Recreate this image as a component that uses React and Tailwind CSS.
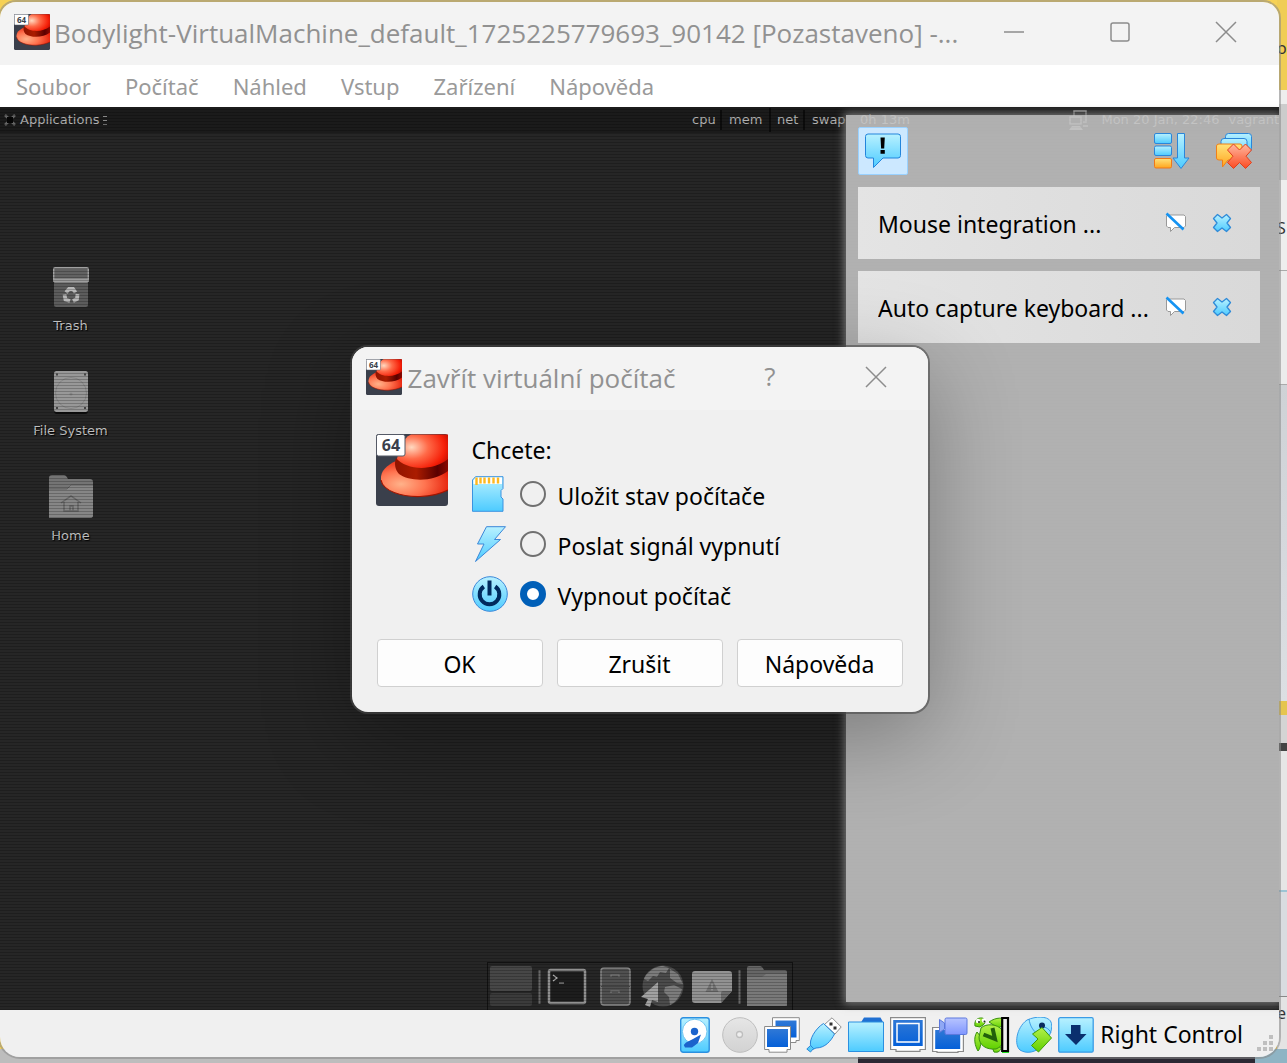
import React, { useState } from 'react';

const UI_FONT = "font-['Noto_Sans','Open_Sans',sans-serif]";
const TITLE_FONT = "font-['Open_Sans','Noto_Sans',sans-serif]";

const Gradients = () => (
  <svg width="0" height="0" className="absolute" aria-hidden="true">
    <defs>
      <linearGradient id="blue" x1="0" y1="0" x2="0" y2="1">
        <stop offset="0" stopColor="#b8f1ff" />
        <stop offset="1" stopColor="#4dcbff" />
      </linearGradient>
      <linearGradient id="screen" x1="0" y1="0" x2="0" y2="1">
        <stop offset="0" stopColor="#2f78d6" />
        <stop offset="1" stopColor="#0560d8" />
      </linearGradient>
      <linearGradient id="orange" x1="0" y1="0" x2="0" y2="1">
        <stop offset="0" stopColor="#ffe27a" />
        <stop offset="1" stopColor="#ffa51e" />
      </linearGradient>
      <linearGradient id="red" x1="0" y1="0" x2="0" y2="1">
        <stop offset="0" stopColor="#ffb9a0" />
        <stop offset="1" stopColor="#fb4a22" />
      </linearGradient>
      <linearGradient id="green" x1="0" y1="0" x2="0" y2="1">
        <stop offset="0" stopColor="#b4f04a" />
        <stop offset="1" stopColor="#5fd000" />
      </linearGradient>
      <linearGradient id="violet" x1="0" y1="0" x2="0" y2="1">
        <stop offset="0" stopColor="#b7c4ff" />
        <stop offset="1" stopColor="#8096ff" />
      </linearGradient>
      <linearGradient id="disc" x1="0" y1="0" x2="0" y2="1">
        <stop offset="0" stopColor="#e6e6e6" />
        <stop offset="1" stopColor="#d2d2d2" />
      </linearGradient>
      <radialGradient id="crown" cx="0.3" cy="0.35" r="0.8">
        <stop offset="0" stopColor="#ffd9c0" />
        <stop offset="0.4" stopColor="#ff6a48" />
        <stop offset="0.8" stopColor="#f51f08" />
        <stop offset="1" stopColor="#c00c00" />
      </radialGradient>
      <radialGradient id="brim" cx="0.3" cy="0.65" r="0.8">
        <stop offset="0" stopColor="#ffb28a" />
        <stop offset="0.45" stopColor="#ff7450" />
        <stop offset="1" stopColor="#e21400" />
      </radialGradient>
      <linearGradient id="band" x1="0" y1="0" x2="1" y2="0">
        <stop offset="0" stopColor="#8f1400" />
        <stop offset="0.4" stopColor="#ab1c00" />
        <stop offset="0.8" stopColor="#5a0000" />
        <stop offset="1" stopColor="#8a0800" />
      </linearGradient>
    </defs>
  </svg>
);

const RedHat = ({ className }) => (
  <svg viewBox="0 0 72 72" className={className} aria-hidden="true">
    <rect width="72" height="72" rx="3" fill="#3a3f4b" />
    <path d="M72 28L20 27C11 31 4 37 5 46C7 57 25 63 44 62.500C56 62 66 59 72 56Z" fill="url(#brim)" />
    <path d="M5 46C7 57 25 63 44 62.500C56 62 66 59 72 56" fill="none" stroke="#a01500" strokeWidth="1.200" />
    <path d="M20 30C22 18 26 4 35 0.500H72V32C60 38 32 40 20 30Z" fill="url(#crown)" />
    <path d="M20 24C30 36 56 38 72 25V37C58 48 34 48 23 40C19 36 18 29 20 24Z" fill="url(#band)" />
    <rect x="0.500" y="0.500" width="28.500" height="21.500" rx="2" fill="#fff" stroke="#555a66" strokeWidth="1" />
    <text x="15" y="17" textAnchor="middle" fontFamily="Open Sans" fontWeight="700" fontSize="16" fill="#3a3f4b">64</text>
  </svg>
);

const SdCard = () => (
  <svg viewBox="0 0 36 36" className="size-9" aria-hidden="true">
    <path d="M0.500 4L3.500 0.700H31V12.500L29 14.500V21L31 23V35.300H0.500Z" fill="url(#blue)" stroke="#3b93e0" />
    <path d="M1.500 4.500L4 1.500H30V8H1.500Z" fill="#fff" />
    <path d="M4.500 1.500V9M8.500 1.500V7.500M12.500 1.500V7.500M17 1.500V7.500M21.500 1.500V7.500M26 1.500V7.500" stroke="#ffb81f" strokeWidth="2.400" />
  </svg>
);

const Lightning = () => (
  <svg viewBox="0 0 36 36" className="size-9" aria-hidden="true">
    <path d="M14.500 0.700H33.500L22.500 13.500H28.500L3.500 35.500L12 18H5.500Z" fill="url(#blue)" stroke="#3b87d8" />
  </svg>
);

const PowerIcon = () => (
  <svg viewBox="0 0 36 36" className="size-9" aria-hidden="true">
    <circle cx="18" cy="18" r="17.300" fill="url(#blue)" stroke="#3b87d8" />
    <path d="M11.800 10.500A9.800 9.800 0 1 0 23.200 10.500" fill="none" stroke="#002a5e" strokeWidth="4" />
    <path d="M17.500 4.500V19.500" stroke="#002a5e" strokeWidth="4" />
  </svg>
);

const AlertBubble = () => (
  <svg viewBox="0 0 36 36" className="size-9" aria-hidden="true">
    <path d="M3 1H33A2.500 2.500 0 0 1 35.500 3.500V22.500A2.500 2.500 0 0 1 33 25H18L8.500 34.500V25H3A2.500 2.500 0 0 1 0.500 22.500V3.500A2.500 2.500 0 0 1 3 1Z" fill="url(#blue)" stroke="#2385dc" />
    <path d="M15.500 4.500H19.800L19.200 15.500H16.100ZM15.500 17H19.800V20.800H15.500Z" fill="#000" />
  </svg>
);

const SortIcon = () => (
  <svg viewBox="0 0 36 36" className="size-9" aria-hidden="true">
    <g fill="url(#blue)" stroke="#2b86d9">
      <rect x="0.500" y="0.500" width="17" height="10" rx="1.500" />
      <rect x="0.500" y="13" width="17" height="9.500" rx="1.500" />
      <path d="M23.500 0.500H30.500V25H35L27 35.500L19 25H23.500Z" />
    </g>
    <rect x="0.500" y="25.500" width="17" height="9.500" rx="1.500" fill="url(#orange)" stroke="#f07818" />
  </svg>
);

const ClearAllIcon = () => (
  <svg viewBox="0 0 36 36" className="size-9" aria-hidden="true">
    <g fill="url(#blue)" stroke="#2b86d9">
      <rect x="9.500" y="0.500" width="26" height="18" rx="3" />
      <rect x="5" y="5.500" width="26" height="18" rx="3" />
    </g>
    <path d="M3 11H24Q26 11 26 13V27H12L6.500 34V27H3Q0.500 27 0.500 25V13Q0.500 11 3 11Z" fill="url(#orange)" stroke="#f08018" />
    <path d="M17.500 11L23.500 17L29.500 11L35.500 17L30 23.200L35.500 29.500L29.500 35.500L23.500 29.500L17.500 35.500L11.500 29.500L17 23.200L11.500 17Z" fill="url(#red)" stroke="#e0401c" />
  </svg>
);

const MutedBubble = () => (
  <svg viewBox="0 0 22 22" className="size-[22px]" aria-hidden="true">
    <path d="M2.500 3H19L20.500 4.500V14L19 15.500H9.500L5.500 19.500V15.500H3L1.500 14V4Z" fill="#fff" stroke="#999" />
    <path d="M1.500 1.500L18.500 17.500" stroke="#1593f2" strokeWidth="2.600" />
  </svg>
);

const BlueCross = () => (
  <svg viewBox="0 0 20 20" className="size-5" aria-hidden="true">
    <path d="M5.500 1.500L10 5L14.500 1.500L18.500 5.500L15 10L18.500 14.500L14.500 18.500L10 15L5.500 18.500L1.500 14.500L5 10L1.500 5.500Z" fill="url(#blue)" stroke="#2f8bd8" strokeWidth="1.300" strokeLinejoin="round" />
  </svg>
);

// status bar indicators
const HardDisk = () => (
  <svg viewBox="0 0 36 36" className="size-9" aria-hidden="true">
    <rect x="0.700" y="0.700" width="28.500" height="34.500" rx="2.500" fill="url(#blue)" stroke="#2b90e0" strokeWidth="1.400" />
    <circle cx="14.700" cy="14.500" r="12.300" fill="#fff" stroke="#70c6f2" />
    <circle cx="14.500" cy="14.500" r="3.700" fill="#1b63cc" />
    <path d="M21 17.500L18 26L12 30.500H5L3.800 28L6 25.500L13 22Z" fill="#1b63cc" />
  </svg>
);

const OpticalDisk = () => (
  <svg viewBox="0 0 36 36" className="size-9" aria-hidden="true">
    <circle cx="18" cy="18" r="17.300" fill="url(#disc)" stroke="#bebebe" />
    <circle cx="17.500" cy="17.500" r="3" fill="#eee" stroke="#bebebe" strokeWidth="1.300" />
  </svg>
);

const Network = () => (
  <svg viewBox="0 0 36 36" className="size-9" aria-hidden="true">
    <path d="M8.500 0.700H35.300V23.500H32V25.500H27L8.500 20Z" fill="#fff" stroke="#8a8a8a" />
    <rect x="11.500" y="3.500" width="21" height="17" fill="url(#screen)" />
    <path d="M0.600 9.500H26.500V32.500H23V35.200H5V32.500H0.600Z" fill="#fff" stroke="#8a8a8a" />
    <rect x="3" y="12" width="21" height="18" fill="url(#screen)" />
  </svg>
);

const Usb = () => (
  <svg viewBox="0 0 36 36" className="size-9" aria-hidden="true">
    <path d="M26 0.800L35.200 10L29 17L18.500 7.500Z" fill="#fff" stroke="#909090" />
    <path d="M17.500 6.500L28.500 17C25 24 19 31 10 31L6.500 32.500L5 30C2 23 10 11 17.500 6.500Z" fill="url(#blue)" stroke="#2b86d9" />
    <path d="M4.500 28.500L7.500 31.500L4.500 35L0.800 32Z" fill="#57cdf7" stroke="#2b86d9" />
    <path d="M23.500 5.500h3v3h-3zM27.500 9.500h3v3h-3z" fill="#333" />
  </svg>
);

const SharedFolder = () => (
  <svg viewBox="0 0 36 36" className="size-9" aria-hidden="true">
    <path d="M12 7L16 0.500H32.500L35.500 6V8H12Z" fill="#2070d2" />
    <path d="M0.500 5H35.500V34.500H0.500Z" fill="url(#blue)" stroke="#2b90e0" />
  </svg>
);

const Display = () => (
  <svg viewBox="0 0 36 36" className="size-9" aria-hidden="true">
    <path d="M0.600 0.600H35.400V32.500H30V34.300H6V32.500H0.600Z" fill="#fff" stroke="#8a8a8a" strokeWidth="1.200" />
    <rect x="3.200" y="3" width="29.500" height="26" fill="url(#screen)" />
    <rect x="7" y="6.500" width="22" height="18.500" fill="none" stroke="#fff" strokeWidth="1.500" />
  </svg>
);

const Recording = () => (
  <svg viewBox="0 0 36 36" className="size-9" aria-hidden="true">
    <path d="M0.600 10.500H31.400V34.500H26V35.400H5V34.500H0.600Z" fill="#fff" stroke="#8a8a8a" strokeWidth="1.200" />
    <rect x="3.200" y="13" width="25" height="19" fill="url(#screen)" />
    <path d="M7.500 2.500L12.500 6V12L7.500 15.500Z" fill="#8fa8f5" stroke="#5c78dd" />
    <rect x="13" y="1" width="22" height="16.500" rx="1.500" fill="url(#violet)" stroke="#5c78dd" />
  </svg>
);

const Turtle = () => (
  <svg viewBox="0 0 36 36" className="size-9" aria-hidden="true">
    <g fill="url(#green)" stroke="#389010">
      <path d="M3 15C-1 21 1 29 4 34C7 31 7 25 7 20Z" />
      <path d="M15 5C22 0 30 0 33 4C33 8 28 9 24 11Z" />
      <path d="M18 30H27C27 34 24 36 20 35Z" />
      <path d="M1 9C0 4 3 0.500 8 1C12 1.500 12 6 9 8L6 10Z" />
      <path d="M7 11C12 6 24 7 28 13C32 21 30 29 22 32C12 33 5 28 5 20Z" />
    </g>
    <circle cx="4" cy="4" r="2.200" fill="#fff" />
    <circle cx="10" cy="3.500" r="2.200" fill="#fff" />
    <circle cx="5" cy="5" r="1" fill="#222" />
    <circle cx="10.500" cy="4.500" r="1" fill="#222" />
    <path d="M9.500 17.500L21 22L18.500 11" fill="none" stroke="#22600b" strokeWidth="4" />
    <path d="M28.200 1H34V34H28.200Z" fill="#efefef" stroke="#000" strokeWidth="2.200" />
    <path d="M28 35.500H35" stroke="#1edc1e" />
  </svg>
);

const MouseIntegration = () => (
  <svg viewBox="0 0 36 36" className="size-9" aria-hidden="true">
    <path d="M11 3C20 -1 31 -1 34.500 4C38 10 34 20 27 28C20 36 10 37 4 33C-2 28 0 11 11 3Z" fill="url(#blue)" stroke="#3b9ce5" />
    <path d="M13 2C14 9 17 14 23 18M23 10C28 9 33 11 35 16" fill="none" stroke="#3b9ce5" />
    <circle cx="26" cy="8.500" r="3" fill="#0a2c60" />
    <path d="M26 10.500L35.500 21L22.500 35L15.500 28.500L22 22L16.500 17Z" fill="url(#green)" stroke="#3d9c0c" />
  </svg>
);

const HostKey = () => (
  <svg viewBox="0 0 36 36" className="size-9" aria-hidden="true">
    <rect x="0.700" y="0.700" width="34.500" height="34.500" rx="1.500" fill="url(#blue)" stroke="#3b9ce5" strokeWidth="1.300" />
    <path d="M13 8H22.500V17H28.500L18 28L7 17H13Z" fill="#0a2f6e" />
  </svg>
);

const INDICATORS = [
  { name: 'Pevné disky', Icon: HardDisk },
  { name: 'Optické disky', Icon: OpticalDisk },
  { name: 'Síť', Icon: Network },
  { name: 'USB', Icon: Usb },
  { name: 'Sdílené složky', Icon: SharedFolder },
  { name: 'Obrazovka', Icon: Display },
  { name: 'Nahrávání', Icon: Recording },
  { name: 'Procesor', Icon: Turtle },
  { name: 'Myš', Icon: MouseIntegration },
  { name: 'Klávesnice', Icon: HostKey },
];

// guest desktop
const TrashIcon = () => (
  <svg viewBox="0 0 48 48" className="size-12" aria-hidden="true">
    <rect x="7" y="17" width="34" height="27" rx="2" fill="#5c5c5c" />
    <rect x="6.700" y="4.700" width="34.600" height="14" rx="1.500" fill="#626262" stroke="#a0a0a0" strokeWidth="1.400" />
    <path d="M6 15.500H42V18.500H6Z" fill="#9c9c9c" />
    <g fill="none" stroke="#b8b8b8" strokeWidth="3.800">
      <path d="M19 29.500L22 26H26L28.500 29.500" />
      <path d="M30.500 31L30 36L26 38" />
      <path d="M23 38L18.500 36.500L17.500 31.500" />
    </g>
  </svg>
);

const DriveIcon = () => (
  <svg viewBox="0 0 48 48" className="size-12" aria-hidden="true">
    <rect x="7" y="5" width="34" height="41" rx="3" fill="#0c0c0c" />
    <rect x="7" y="3" width="34" height="41" rx="2.500" fill="#989898" />
    <circle cx="24" cy="25" r="15.500" fill="none" stroke="#868686" />
    <circle cx="24" cy="26" r="1.500" fill="#868686" />
    <path d="M9 5.500h2v2h-2zM37 5.500h2v2h-2zM9 39h2v2h-2zM37 39h2v2h-2z" fill="#444" />
  </svg>
);

const FolderIcon = ({ home }) => (
  <svg viewBox="0 0 48 48" className="size-12" aria-hidden="true">
    <path d="M2 5Q2 2 5 2H17Q19 2 21 6H43Q46 6 46 9V42Q46 45 43 45H2Z" fill="#747474" />
    <path d="M2 16H20L24 12H46V42Q46 45 43 45H2Z" fill="#868686" />
    <path d="M2 16H20L24 12H46" fill="none" stroke="#606060" />
    {home && <path d="M14 30L24 23L34 30M17 29V38H31V29M23 38V33H26V38" fill="none" stroke="#666" strokeWidth="1.500" />}
  </svg>
);

const DesktopIcon = ({ label, children }) => (
  <button type="button" className="flex w-full flex-col items-center">
    {children}
    <span className="mt-[5px] leading-5 text-[#c0c0c0] [text-shadow:1px_1px_1px_#000]">{label}</span>
  </button>
);

const Dock = () => (
  <div className="flex h-12 items-center self-center border border-b-0 border-[#111] px-0.5">
    <svg viewBox="0 0 300 44" className="h-11 w-[300px]" aria-hidden="true">
      <rect x="0" y="1" width="42" height="25" rx="2" fill="#474747" />
      <rect x="0" y="28" width="42" height="13" rx="2" fill="#3b3b3b" />
      <path d="M49.500 5V39M249.500 5V39" stroke="#686868" strokeWidth="2" />
      <rect x="59" y="5" width="36" height="33" rx="1.500" fill="#1d1d1d" stroke="#909090" strokeWidth="2.500" />
      <path d="M63 10L67 13L63 16M69 18H74" fill="none" stroke="#b0b0b0" strokeWidth="1.200" />
      <rect x="111" y="3" width="29" height="37" rx="3" fill="#505050" stroke="#858585" strokeWidth="1.500" />
      <path d="M111 21.500H140" stroke="#424242" />
      <path d="M121 12V10H129V12M121 28V26H129V28" fill="none" stroke="#7b7b7b" strokeWidth="1.200" />
      <circle cx="173" cy="21" r="20.500" fill="#4b4b4b" />
      <path d="M158 8C163 3 168 1 173 1L179 3L176 8L170 7L167 12L163 11L158 16L154 14C155 11 156 10 158 8ZM175 22L184 20L192 24C190 32 185 38 180 40L179 32L174 27ZM180 4L188 9L193 19L187 18L180 13Z" fill="#7c7c7c" />
      <path d="M168 17V37L162 35L160 42L155 40L158 34L151 32Z" fill="#a2a2a2" />
      <path d="M205 6H239Q242 6 242 9V26L231 38H205Q202 38 202 35V9Q202 6 205 6Z" fill="#929292" />
      <path d="M231 38V28Q231 26 233 26H242Z" fill="#6e6e6e" />
      <path d="M222 14L228.500 27H215.500Z" fill="#727272" />
      <path d="M222 18.500V23M222 24V25.500" stroke="#959595" strokeWidth="1.500" />
      <path d="M257 3Q257 1 259 1H270Q272 1 274 5H295Q297 5 297 7V41H257Z" fill="#666" />
      <path d="M257 12H272L276 9H297V39Q297 41 295 41H257Z" fill="#797979" />
    </svg>
  </div>
);

const GuestPanel = () => (
  <div className="flex h-[26px] items-center overflow-hidden whitespace-nowrap bg-[#1b1b1b] text-[#b0b0b0]">
    <button type="button" className="flex items-center gap-1 pl-1">
      <svg viewBox="0 0 12 12" className="size-3" aria-hidden="true">
        <path d="M1 1L11 11M11 1L1 11" stroke="#666" strokeWidth="2.500" />
        <rect x="3" y="3" width="6" height="6" fill="#060606" />
      </svg>
      Applications
      <svg viewBox="0 0 5 10" className="h-2.5 w-[5px]" aria-hidden="true">
        <path d="M0 1.500H4M0 5.500H4M0 9.500H4" stroke="#888" />
      </svg>
    </button>
    <div className="ml-auto flex w-[587px] shrink-0 items-center">
      <span className="w-7">cpu</span>
      <span className="h-5 w-[9px] border-l-2 border-[#0c0c0c]" />
      <span className="w-10">mem</span>
      <span className="flex h-6 w-2 items-end border-l-2 border-[#0c0c0c]" />
      <span className="w-[26px]">net</span>
      <span className="h-5 w-[9px] border-l-2 border-[#0c0c0c]" />
      <span className="w-12">swap</span>
      <span>0h 13m</span>
      <svg viewBox="0 0 20 20" className="ml-auto mr-3 size-5" aria-hidden="true">
        <path d="M5 6V1H17V12H14M1 7H12V14H1ZM14 16H19" fill="none" stroke="#a0a0a0" strokeWidth="1.500" />
        <path d="M0 20L3 16H11L14 20Z" fill="#a0a0a0" />
      </svg>
      <span className="w-[127px]">Mon 20 Jan, 22:46</span>
      <span>vagrant</span>
    </div>
  </div>
);

const Notification = ({ title }) => (
  <li className="flex h-[72px] items-center bg-linear-to-r from-[#e4e4e4] to-[#d9d9d9] pl-5 pr-7">
    <span className="flex-1 truncate pt-0.5">{title}</span>
    <button type="button" aria-label="Nezobrazovat" className="mr-[25px]"><MutedBubble /></button>
    <button type="button" aria-label="Zavřít"><BlueCross /></button>
  </li>
);

const NotificationCenter = () => (
  <aside className={`absolute bottom-2 right-0 top-2 w-[433px] bg-[#c5c5c5]/88 pl-3 pr-[19px] pt-3 text-[23px] text-black shadow-[0_0_8px_2px_#777] ${UI_FONT}`}>
    <div className="flex h-12 items-center">
      <button type="button" aria-label="Oznámení" className="flex h-12 w-[50px] items-center justify-center rounded-xs border border-[#99d1ff] bg-[#cce8ff]">
        <AlertBubble />
      </button>
      <button type="button" aria-label="Seřadit" className="ml-auto mr-[26px]"><SortIcon /></button>
      <button type="button" aria-label="Smazat vše" className="mr-2"><ClearAllIcon /></button>
    </div>
    <ul className="mt-3 space-y-3">
      <Notification title="Mouse integration ..." />
      <Notification title="Auto capture keyboard ..." />
    </ul>
  </aside>
);

const OPTIONS = [
  { id: 'save', label: 'Uložit stav počítače', Icon: SdCard },
  { id: 'shutdown', label: 'Poslat signál vypnutí', Icon: Lightning },
  { id: 'poweroff', label: 'Vypnout počítač', Icon: PowerIcon },
];

const CloseDialog = () => {
  const [choice, setChoice] = useState('poweroff');

  return (
    <div role="dialog" aria-labelledby="dialog-title" className="w-[576px] overflow-hidden rounded-2xl bg-[#f0f0f0] text-[23px] text-black shadow-[0_0_0_2px_#4a4a4a99,0_24px_90px_#00000050]">
      <div className={`flex h-[63px] items-center bg-[#f3f3f3] pl-3.5 pr-10 text-[#919191] ${TITLE_FONT}`}>
        <RedHat className="mb-1 size-9" />
        <h2 id="dialog-title" className="ml-1.5 flex-1 text-[26px]">Zavřít virtuální počítač</h2>
        <button type="button" aria-label="Nápověda" className="mb-1 mr-[88px] text-[26px]">?</button>
        <button type="button" aria-label="Zavřít" className="mb-1">
          <svg viewBox="0 0 24 24" className="size-6" aria-hidden="true">
            <path d="M2 2L22 22M22 2L2 22" stroke="#8c8c8c" strokeWidth="1.500" />
          </svg>
        </button>
      </div>
      <div className="flex gap-6 px-6 pt-6">
        <RedHat className="size-[72px]" />
        <fieldset>
          <legend className="h-[42px] leading-8">Chcete:</legend>
          <div className="space-y-3.5">
            {OPTIONS.map(({ id, label, Icon }) => (
              <label key={id} className="flex h-9 items-center gap-3">
                <Icon />
                <input
                  type="radio"
                  name="close-action"
                  value={id}
                  checked={choice === id}
                  onChange={() => setChoice(id)}
                  className="size-[26px] appearance-none rounded-full border-2 border-[#707070] checked:border-[7px] checked:border-[#005fb8] checked:bg-white"
                />
                <span className="pt-1">{label}</span>
              </label>
            ))}
          </div>
        </fieldset>
      </div>
      <div className="flex gap-3.5 px-[25px] pb-[25px] pt-[27px]">
        {['OK', 'Zrušit', 'Nápověda'].map((label) => (
          <button key={label} type="button" className="h-12 flex-1 rounded-sm border border-[#d0d0d0] bg-[#fdfdfd] pt-0.5">
            {label}
          </button>
        ))}
      </div>
    </div>
  );
};

// slices of the windows that stay visible behind this one
const Backdrop = () => (
  <div className="absolute inset-0 flex flex-col overflow-hidden bg-[#f6d155]" aria-hidden="true">
    <div className="flex min-h-0 flex-1 justify-end">
      <div className="flex w-2.5 flex-col overflow-hidden bg-[#e8e8e8] text-[#333]">
        <div className="h-[90px] bg-[#f0cd55] pt-8 text-base leading-8">o</div>
        <div className="h-3.5 bg-[#eee]" />
        <div className="h-[76px] bg-[#ccc]" />
        <div className="h-[91px] border-b border-[#aaa] bg-[#eee] pt-8 text-base leading-8">S</div>
        <div className="h-[114px] border-b border-[#aaa] bg-[#ececec]" />
        <div className="h-[316px] bg-linear-to-b from-[#cfd2d6] to-[#dcdfe3]" />
        <div className="h-3.5 bg-[#e5c54f]" />
        <div className="h-7 bg-[#d4d4d4]" />
        <div className="h-2 bg-[#444]" />
        <div className="h-[141px] border-b-2 border-[#9cc4d4] bg-[#e6e6e6]" />
        <div className="h-[105px] border-b border-[#888] bg-[#d9dce0]" />
        <div className="flex-1 bg-[#e4e4e4] pt-1 text-base">e</div>
      </div>
    </div>
    <div className="flex h-3.5">
      <div className="w-2/3 bg-[#bdbdbd]" />
      <div className="flex-1 bg-[#2b2833]" />
      <div className="w-8 bg-[#8fb4c4]" />
    </div>
  </div>
);

const MENU = ['Soubor', 'Počítač', 'Náhled', 'Vstup', 'Zařízení', 'Nápověda'];

export default function App() {
  return (
    <div className={`relative h-screen overflow-hidden pb-1.5 pr-2 pt-0.5 ${UI_FONT}`}>
      <Gradients />
      <Backdrop />
      <main className="relative flex h-full flex-col overflow-hidden rounded-b-[20px] rounded-t-2xl shadow-[0_0_0_2px_#8888888c]">
        <header className={`flex h-[63px] shrink-0 items-center bg-[#f3f3f3] pl-3.5 text-[#919191] ${TITLE_FONT}`}>
          <RedHat className="mb-1 size-9 shrink-0" />
          <h1 className="ml-1 flex-1 truncate text-[26px]">Bodylight-VirtualMachine_default_1725225779693_90142 [Pozastaveno] -...</h1>
          <div className="mb-1 flex">
            <button type="button" aria-label="Minimalizovat" className="flex w-[106px] justify-center">
              <svg viewBox="0 0 24 24" className="size-6"><path d="M2 12H22" stroke="#8c8c8c" strokeWidth="1.500" /></svg>
            </button>
            <button type="button" aria-label="Maximalizovat" className="flex w-[106px] justify-center">
              <svg viewBox="0 0 24 24" className="size-6"><rect x="3" y="3" width="18" height="18" rx="2" fill="none" stroke="#8c8c8c" strokeWidth="1.500" /></svg>
            </button>
            <button type="button" aria-label="Zavřít" className="flex w-[106px] justify-center">
              <svg viewBox="0 0 24 24" className="size-6"><path d="M2 2L22 22M22 2L2 22" stroke="#8c8c8c" strokeWidth="1.500" /></svg>
            </button>
          </div>
        </header>

        <nav className="flex h-[42px] shrink-0 items-center gap-[34px] bg-white pl-4 text-[22px] text-[#9a9a9a]">
          {MENU.map((item) => (
            <button key={item} type="button">{item}</button>
          ))}
        </nav>

        <section className="relative flex min-h-0 flex-1 flex-col bg-[#262626] font-['DejaVu_Sans',sans-serif] text-[13px]">
          <GuestPanel />
          <div className="flex w-[141px] flex-1 flex-col gap-8 pt-[130px]">
            <DesktopIcon label="Trash"><TrashIcon /></DesktopIcon>
            <DesktopIcon label="File System"><DriveIcon /></DesktopIcon>
            <DesktopIcon label="Home"><FolderIcon home /></DesktopIcon>
          </div>
          <Dock />
          {/* dimmed scanlines of the paused machine */}
          <div className="pointer-events-none absolute inset-0 bg-[repeating-linear-gradient(0deg,#00000038_0px,#00000038_1px,transparent_1px,transparent_3px)]" />
          <NotificationCenter />
        </section>

        <footer className="flex h-[47px] shrink-0 items-center justify-end gap-1.5 bg-[#f0f0f0] pr-1 pt-0.5 text-[23px] text-black">
          {INDICATORS.map(({ name, Icon }) => (
            <button key={name} type="button" aria-label={name}><Icon /></button>
          ))}
          <span>Right Control</span>
          <svg viewBox="0 0 18 18" className="mb-1 ml-2 size-[18px] self-end" aria-hidden="true">
            <path d="M12 0h4v4h-4zM6 6h4v4h-4zM12 6h4v4h-4zM0 12h4v4h-4zM6 12h4v4h-4zM12 12h4v4h-4z" fill="#bfbfbf" />
          </svg>
        </footer>

        <div className="absolute inset-0 flex items-center justify-center">
          <CloseDialog />
        </div>
      </main>
    </div>
  );
}
